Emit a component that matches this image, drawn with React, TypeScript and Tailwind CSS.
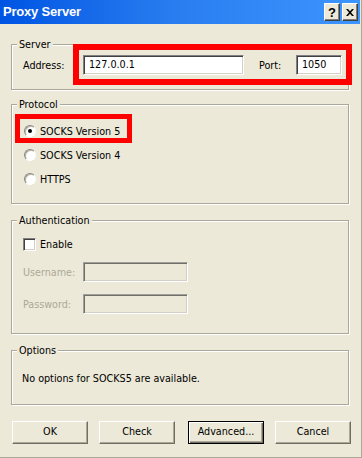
import React from "react";

const sunken =
  "border border-white border-t-[#808080] border-l-[#808080] shadow-[inset_1px_1px_0_#404040,inset_-1px_-1px_0_#d4d0c8]";
const sunkenDisabled =
  "border border-white border-t-[#a0a0a0] border-l-[#a0a0a0] shadow-[inset_1px_1px_0_#716f64,inset_-1px_-1px_0_#d4d0c8]";

function Group({
  title,
  className,
  children,
}: {
  title: string;
  className: string;
  children?: React.ReactNode;
}) {
  return (
    <div
      className={
        "w-[338px] border border-[#aca899] shadow-[1px_1px_0_#fff,inset_1px_1px_0_#fff] flex flex-col " +
        className
      }
    >
      <div className="ml-[5px] -mt-[7px] -mb-[6px] w-fit px-[2px] bg-[#ece9d8] h-[13px] leading-[13px]">
        {title}
      </div>
      {children}
    </div>
  );
}

function Radio({ checked, label }: { checked?: boolean; label: string }) {
  return (
    <div className="h-[24px] flex items-center pl-[12px]">
      <span className="w-[12px] h-[12px] rounded-full bg-white border border-white border-t-[#8a8a82] border-l-[#8a8a82] shadow-[inset_1px_1px_0_#b5b3a8] flex items-center justify-center">
        {checked && <span className="w-[4px] h-[4px] rounded-full bg-black" />}
      </span>
      <span className="ml-[4px] leading-[13px]">{label}</span>
    </div>
  );
}

function Btn({ label, className }: { label: string; className?: string }) {
  return (
    <div
      className={
        "h-[23px] w-[76px] flex items-center justify-center bg-[#ece9d8] " +
        (className ?? "")
      }
    >
      {label}
    </div>
  );
}

const normalBtn =
  "border border-white border-r-[#716f64] border-b-[#716f64] shadow-[inset_-1px_-1px_0_#aca899]";
const defaultBtn =
  "border border-black shadow-[inset_1px_1px_0_#fff,inset_-1px_-1px_0_#716f64,inset_-2px_-2px_0_#aca899]";

export default function App() {
  return (
    <div className="relative w-[362px] h-[458px] bg-[#ece9d8] overflow-hidden font-['DejaVu_Sans_Condensed','Liberation_Sans',sans-serif] text-[10.7px] text-black">
      <div className="w-[362px] h-[458px] border-r border-b border-[#aca899] flex flex-col">
        {/* Title bar */}
        <div className="w-[360px] h-[24px] shrink-0 flex items-center pl-[3px] pr-[2px] bg-linear-to-r from-[#0054e3] via-[#2a7ef0] to-[#3d95ff]">
          <span className="flex-1 text-white font-bold text-[13px] leading-[16px] tracking-[-0.2px] font-['Liberation_Sans',Arial,sans-serif]">
            Proxy Server
          </span>
          <div className="w-[16px] h-[18px] flex items-center justify-center bg-[#ece9d8] border border-white border-r-[#404040] border-b-[#404040] shadow-[inset_-1px_-1px_0_#808080] font-bold text-[13px] leading-[13px] font-['Liberation_Sans',Arial,sans-serif]">
            ?
          </div>
          <div className="ml-[2px] w-[16px] h-[18px] flex items-center justify-center bg-[#ece9d8] border border-white border-r-[#404040] border-b-[#404040] shadow-[inset_-1px_-1px_0_#808080]">
            <svg width="8" height="7" viewBox="0 0 8 7">
              <path d="M0 0h2l2 2.2L6 0h2L5 3.5 8 7H6L4 4.8 2 7H0l3-3.5z" fill="#000" />
            </svg>
          </div>
        </div>

        {/* Content */}
        <div className="flex flex-col pl-[11px]">
          <Group title="Server" className="mt-[20px] h-[46px]">
            <div className="mt-[10px] flex items-center pl-[11px]">
              <span className="w-[60px] leading-[13px]">Address:</span>
              <div className={"w-[161px] h-[20px] bg-white flex items-center pl-[5px] " + sunken}>
                127.0.0.1
              </div>
              <span className="ml-[15px] w-[37px] leading-[13px]">Port:</span>
              <div className={"w-[46px] h-[20px] bg-white flex items-center pl-[5px] " + sunken}>
                1050
              </div>
            </div>
          </Group>

          <Group title="Protocol" className="mt-[14px] h-[100px]">
            <div className="mt-[14px] flex flex-col">
              <Radio checked label="SOCKS Version 5" />
              <Radio label="SOCKS Version 4" />
              <Radio label="HTTPS" />
            </div>
          </Group>

          <Group title="Authentication" className="mt-[16px] h-[114px]">
            <div className="mt-[17px] flex items-center pl-[11px] h-[13px]">
              <span className={"w-[13px] h-[13px] bg-white " + sunken} />
              <span className="ml-[4px] leading-[13px]">Enable</span>
            </div>
            <div className="mt-[11px] flex items-center pl-[11px] text-[#aca899]">
              <span className="w-[60px] leading-[13px]">Username:</span>
              <div className={"w-[105px] h-[20px] bg-[#ece9d8] " + sunkenDisabled} />
            </div>
            <div className="mt-[12px] flex items-center pl-[11px] text-[#aca899]">
              <span className="w-[60px] leading-[13px]">Password:</span>
              <div className={"w-[105px] h-[20px] bg-[#ece9d8] " + sunkenDisabled} />
            </div>
          </Group>

          <Group title="Options" className="mt-[16px] h-[55px]">
            <div className="mt-[21px] pl-[10px] leading-[13px]">
              No options for SOCKS5 are available.
            </div>
          </Group>

          <div className="mt-[16px] flex">
            <Btn label="OK" className={"ml-[1px] " + normalBtn} />
            <Btn label="Check" className={"ml-[11px] " + normalBtn} />
            <Btn label="Advanced..." className={"ml-[13px] " + defaultBtn} />
            <Btn label="Cancel" className={"ml-[11px] " + normalBtn} />
          </div>
        </div>
      </div>

      {/* Red annotation boxes */}
      <div className="absolute left-[73px] top-[44px] w-[279px] h-[41px] border-[6px] border-[#ff0000]" />
      <div className="absolute left-[15px] top-[114px] w-[117px] h-[29px] border-[5px] border-[#ff0000]" />
    </div>
  );
}
